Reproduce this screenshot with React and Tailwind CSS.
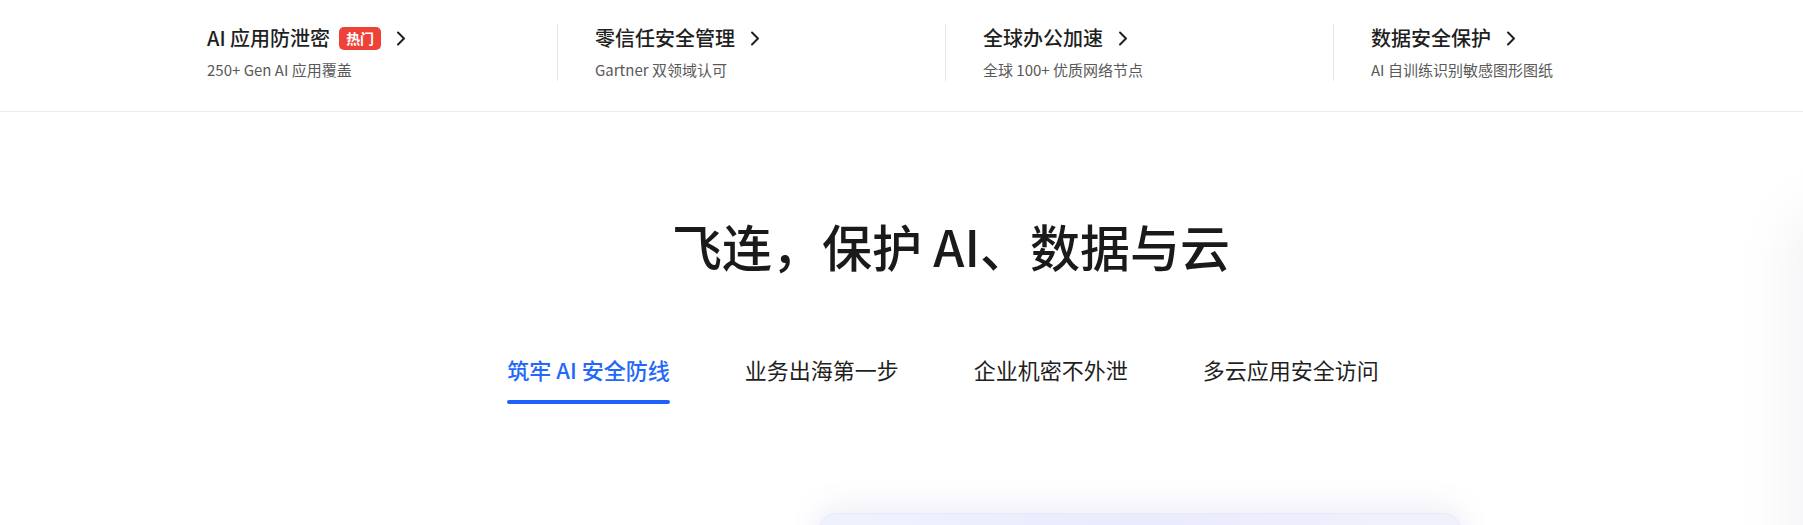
import React from "react";

const navItems = [
  { title: "AI 应用防泄密", desc: "250+ Gen AI 应用覆盖", hot: true },
  { title: "零信任安全管理", desc: "Gartner 双领域认可" },
  { title: "全球办公加速", desc: "全球 100+ 优质网络节点" },
  { title: "数据安全保护", desc: "AI 自训练识别敏感图形图纸" },
];

const tabs = ["筑牢 AI 安全防线", "业务出海第一步", "企业机密不外泄", "多云应用安全访问"];

const Chevron = () => (
  <svg width="10" height="15" viewBox="0 0 10 15" fill="none" className="ml-[15px] shrink-0">
    <path d="M2 1.5 L8 7.5 L2 13.5" stroke="#1f1f1f" strokeWidth="2" strokeLinecap="round" strokeLinejoin="round" />
  </svg>
);

const App = () => {

  const active = 0;

  return (

    <div className="relative h-[525px] overflow-hidden bg-white font-['Noto_Sans_CJK_SC','Noto_Sans',sans-serif] text-[#1f1f1f]">

      {/* faint decoration on the right edge */}
      <div className="pointer-events-none absolute right-[-90px] top-[200px] h-[420px] w-[110px] rounded-full bg-[#f5f5f7] blur-xl" />

      <div className="h-[112px] border-b border-[#ececec]">
        <div className="pl-[87px]">
          <div className="mx-auto grid w-[1552px] grid-cols-4 pt-[24px]">

            {navItems.map((item, i) => (

              <div
                key={item.title}
                className={`h-[57px] border-l pl-[37px] ${i === 0 ? "border-transparent" : "border-[#e8e8e8]"}`}
              >

                <div className="flex h-[28px] items-center text-[20px] font-medium leading-[28px]">
                  <span>{item.title}</span>
                  {item.hot && (
                    <span className="ml-[9px] flex h-[23px] w-[42px] items-center justify-center rounded-[5px] bg-[#ee4137] text-[14px] font-bold leading-none text-white">
                      热门
                    </span>
                  )}
                  <Chevron />
                </div>

                <div className="mt-[7px] text-[15px] leading-[22px] text-[#595959]">
                  {item.desc}
                </div>

              </div>

            ))}

          </div>
        </div>
      </div>

      <div className="pl-[87px]">

        <h1 className="mt-[101px] pl-[12px] text-center text-[50px] font-medium leading-[64px] text-[#1a1a1a]">
          飞连，保护 AI、数据与云
        </h1>

        <div className="mt-[76px] flex justify-center gap-[75px] pr-[4px]">

          {tabs.map((tab, i) => (

            <div key={tab} className="flex flex-col items-stretch">
              <span
                className={`text-[22px] leading-[32px] ${i === active ? "font-medium text-[#2468f9]" : "text-[#1f1f1f]"}`}
              >
                {tab}
              </span>
              <span
                className={`mt-[15px] h-[4px] rounded-full ${i === active ? "bg-[#1d63fb]" : "bg-transparent"}`}
              />
            </div>

          ))}

        </div>

        <div className="mx-auto mt-[109px] flex w-[1200px]">
          <div className="w-[473px] shrink-0" />
          <div className="h-[200px] w-[644px] rounded-[18px] border border-[#e6e8f6] bg-gradient-to-r from-[#eff2fe] via-[#eaebfe] to-[#f1f1fd] shadow-[0_-6px_30px_rgba(110,110,190,0.12)]" />
        </div>

      </div>

    </div>

  );

};

export default App;
